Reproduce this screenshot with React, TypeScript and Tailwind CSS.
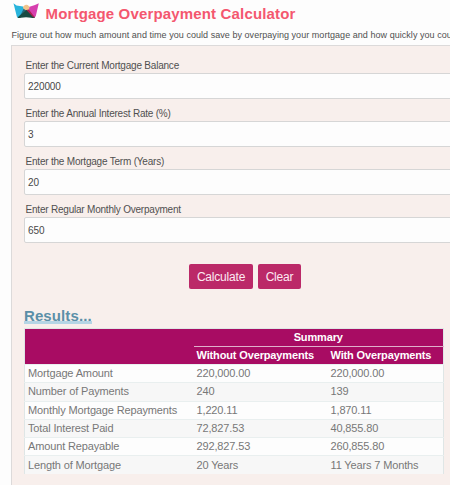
const fields = [
  { label: 'Enter the Current Mortgage Balance', value: '220000' },
  { label: 'Enter the Annual Interest Rate (%)', value: '3' },
  { label: 'Enter the Mortgage Term (Years)', value: '20' },
  { label: 'Enter Regular Monthly Overpayment', value: '650' },
];

const rows = [
  ['Mortgage Amount', '220,000.00', '220,000.00'],
  ['Number of Payments', '240', '139'],
  ['Monthly Mortgage Repayments', '1,220.11', '1,870.11'],
  ['Total Interest Paid', '72,827.53', '40,855.80'],
  ['Amount Repayable', '292,827.53', '260,855.80'],
  ['Length of Mortgage', '20 Years', '11 Years 7 Months'],
];

function Logo() {
  return (
    <svg width="26" height="16" viewBox="0 0 26 16" className="block shrink-0">
      <path d="M0.5 0.3 L3.5 2.4 L10 3.6 L13 8 L6 14.8 Q4.5 15.2 3.8 13.5 Z" fill="#28b4dc" />
      <path d="M25.8 0.3 L22 2 L16.5 3.8 L13 8 L20 14.8 Q22 15 22.8 13 Z" fill="#d63fae" />
      <path d="M10 3.8 L12 2 Q13.3 1.4 14.6 2 L16.6 3.8 L15.8 7.5 L13 9 L10.8 7.5 Z" fill="#f0c38a" />
      <path d="M12.6 7 L4.5 14.4 Q5.5 15.6 8 14.8 Q13 13.6 18 14.8 Q21 15.6 22 14.4 L13.8 7 Z" fill="#174b43" />
      <path d="M13.4 7 L15.8 6.4 L21.8 14.2 L20.4 14.6 Z" fill="#a9224d" />
      <path d="M12.8 7.2 L10.6 5.8 L7.6 11.8 Z" fill="#23677a" />
    </svg>
  );
}

export default function App() {
  return (
    <div className="h-[485px] w-[450px] overflow-hidden bg-[#fdfdfd] font-['Liberation_Sans',Arial,sans-serif] text-[#555]">
      <header className="flex h-[28px] pl-[13px] pt-[3px]">
        <Logo />
        <h1 className="ml-[6.5px] mt-[2px] whitespace-nowrap text-[15px] font-bold leading-[18px] tracking-[0.16px] text-[#f4576f]">
          Mortgage Overpayment Calculator
        </h1>
      </header>
      <p className="h-[17px] whitespace-nowrap pl-[11.5px] text-[9px] leading-[14px] tracking-[0.045px] text-[#505050]">
        Figure out how much amount and time you could save by overpaying your mortgage and how quickly you cou
      </p>
      <main className="ml-[11px] h-[441px] w-[460px] border border-[#dcdada] bg-[#f8efec] pl-[12px] pt-[12px]">
        {fields.map((field) => (
          <div key={field.label} className="h-[48px]">
            <label className="block h-[15px] whitespace-nowrap pl-[1.5px] text-[10px] leading-[15px] tracking-[-0.21px] text-[#505050]">
              {field.label}
            </label>
            <input
              readOnly
              value={field.value}
              className="block h-[26px] w-[440px] rounded-[2px] border border-[#d6d6d6] bg-[#fdfdfd] pl-[3px] text-[10px] tracking-[-0.1px] text-[#484848] outline-none"
            />
          </div>
        ))}
        <div className="mt-[14px] flex gap-[5px] pl-[165px] text-[12px] tracking-[-0.2px] text-[#fdeaf2]">
          <button className="h-[25px] w-[64px] rounded-[2px] bg-[#bb2968]">Calculate</button>
          <button className="h-[25px] w-[43px] rounded-[2px] bg-[#bb2968]">Clear</button>
        </div>
        <h2 className="mt-[18px] h-[17px] w-fit whitespace-nowrap border-b-[3px] border-[#b5d5e5] text-[15px] font-bold leading-[18px] tracking-[0.1px] text-[#5b8fa8]">
          Results...
        </h2>
        <table className="mt-[4px] w-[419px] table-fixed border-collapse border border-b-0 border-[#dfe6e6] text-[11px] tracking-[-0.14px] text-[#777]">
          <colgroup>
            <col className="w-[169px]" />
            <col className="w-[134px]" />
            <col className="w-[116px]" />
          </colgroup>
          <thead className="bg-[#a80c63] text-white">
            <tr className="h-[18px]">
              <th rowSpan={2} />
              <th colSpan={2} className="border-b border-[#dfb0cb] p-0 leading-[17px]">Summary</th>
            </tr>
            <tr className="h-[18px] text-left">
              <th className="whitespace-nowrap p-0 pl-[3px] leading-[17px]">Without Overpayments</th>
              <th className="whitespace-nowrap p-0 pl-[3px] leading-[17px]">With Overpayments</th>
            </tr>
          </thead>
          <tbody>
            {rows.map((row) => (
              <tr key={row[0]} className="h-[18.25px] border-t border-[#e9efef] odd:bg-[#fdfdfd] even:bg-[#f7f7f7]">
                {row.map((cell, i) => (
                  <td key={i} className="whitespace-nowrap p-0 pl-[3px] leading-[17px]">{cell}</td>
                ))}
              </tr>
            ))}
          </tbody>
        </table>
      </main>
    </div>
  );
}
